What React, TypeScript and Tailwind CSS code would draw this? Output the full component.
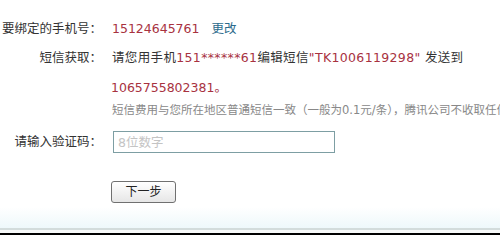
const font = "font-['DejaVu_Sans','Noto_Sans_CJK_SC',sans-serif]";

function Label({ children }: { children: React.ReactNode }) {
  return <div className="w-[102px] shrink-0 text-right text-[#333]">{children}</div>;
}

export default function App() {
  return (
    <div
      className={`flex h-[235px] w-[500px] flex-col overflow-hidden bg-white text-[12.5px] ${font}`}
    >
      <div className="flex flex-1 flex-col pt-[20px]">
        <div className="flex h-[18px] items-center whitespace-nowrap leading-[18px]">
          <Label>要绑定的手机号：</Label>
          <span className="ml-[10px] text-[#a8323f]">15124645761</span>
          <a className="ml-[12px] text-[#2c6b8c]">更改</a>
        </div>

        <div className="mt-[11px] flex h-[18px] items-center whitespace-nowrap leading-[18px]">
          <Label>短信获取：</Label>
          <span className="ml-[10px] tracking-[0.35px] text-[#333]">
            请您用手机<span className="text-[#a8323f]">151******61</span>编辑短信
            <span className="text-[#a8323f]">"TK1006119298"</span> 发送到
          </span>
        </div>

        <div className="mt-[12px] h-[18px] whitespace-nowrap pl-[111px] leading-[18px] text-[#a8323f]">
          1065755802381。
        </div>

        <div className="mt-[4px] h-[18px] whitespace-nowrap pl-[112px] text-[11.5px] leading-[18px] text-[#888]">
          短信费用与您所在地区普通短信一致（一般为0.1元/条），腾讯公司不收取任何费用。
        </div>

        <div className="mt-[12px] flex items-center whitespace-nowrap">
          <Label>请输入验证码：</Label>
          <input
            placeholder="8位数字"
            className="ml-[11px] h-[22px] w-[222px] border border-[#7d9ea3] px-[4px] text-[12.5px] text-[#333] outline-none placeholder:text-[#c4c4c4]"
          />
        </div>

        <button className="ml-[111px] mt-[28px] h-[22px] w-[65px] rounded-[3px] border border-[#707070] bg-gradient-to-b from-white to-[#e6e6e6] text-[12px] leading-[20px] text-[#222]">
          下一步
        </button>
      </div>

      <div className="h-[21px] bg-gradient-to-b from-white to-[#eef8fb]" />
      <div className="h-[2px] bg-[#d3dcdc]" />
      <div className="h-[3px] bg-[#f7f9f9]" />
      <div className="h-[2px] bg-black" />
    </div>
  );
}
